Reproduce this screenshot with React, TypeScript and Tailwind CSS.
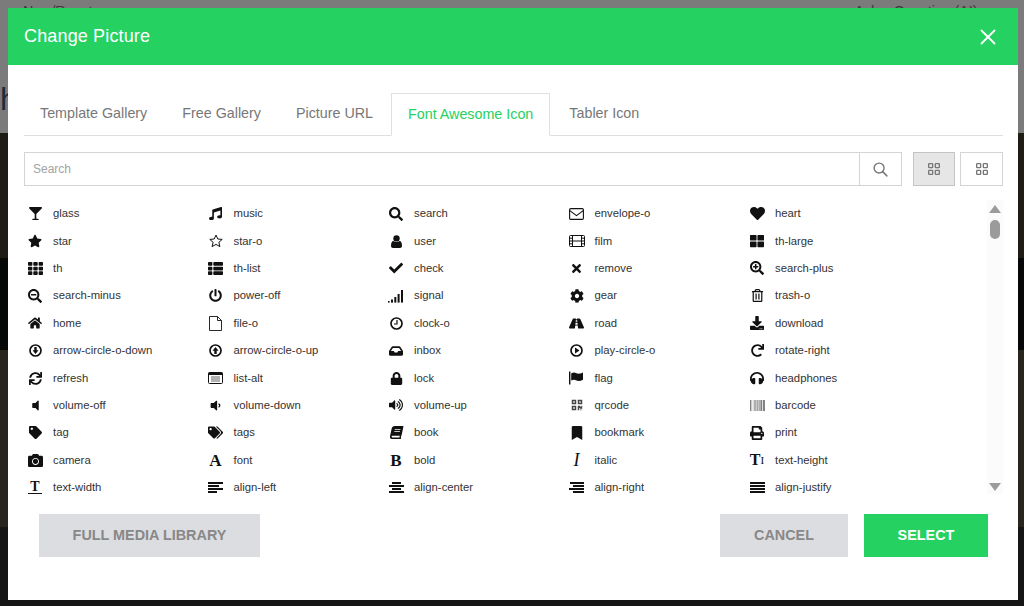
import type { ReactNode } from 'react';
import {
  FaBarcode, FaBook, FaBookmark, FaCamera, FaCheck, FaCog, FaDownload, FaGlassMartini, FaHeadphones, FaHeart, FaHome,
  FaInbox, FaLock, FaMusic, FaPowerOff, FaPrint, FaQrcode, FaRedo, FaRegTrashAlt, FaRoad, FaSearch, FaSearchMinus,
  FaSearchPlus, FaStar, FaSync, FaTag, FaTags, FaTh, FaThLarge, FaThList, FaTimes, FaVolumeDown, FaVolumeOff, FaVolumeUp,
} from 'react-icons/fa';
import { TbLayoutGrid, TbSearch, TbX } from 'react-icons/tb';

function SignalIcon() {
  return (
    <svg width="16" height="14" viewBox="0 0 16 14" fill="currentColor">
      <rect x="0" y="12" width="1.6" height="1.6" />
      <rect x="3" y="10.5" width="2" height="3.1" />
      <rect x="6.3" y="8" width="2" height="5.6" />
      <rect x="9.6" y="5" width="2" height="8.6" />
      <rect x="13" y="1" width="2" height="12.6" />
    </svg>
  );
}

function FilmIcon() {
  return (
    <svg width="16" height="14" viewBox="0 0 16 14" fill="none" stroke="currentColor" strokeWidth="1">
      <rect x="0.5" y="1.5" width="15" height="11" rx="1" />
      <path d="M3.5 1.5v11M12.5 1.5v11M3.5 7h9M0.5 4.2h3M0.5 7h3M0.5 9.8h3M12.5 4.2h3M12.5 7h3M12.5 9.8h3" />
    </svg>
  );
}

function EnvelopeIcon() {
  return (
    <svg width="15" height="12" viewBox="0 0 15 12" fill="none" stroke="currentColor" strokeWidth="1.1">
      <rect x="0.6" y="0.6" width="13.8" height="10.8" rx="1.2" />
      <path d="M0.8 2.6 7.5 7.6l6.7-5" />
    </svg>
  );
}

function StarOutlineIcon() {
  return (
    <svg width="14" height="14" viewBox="0 0 14 14" fill="none" stroke="currentColor" strokeWidth="1" strokeLinejoin="round">
      <path d="M7 1l1.8 4 4.4.4-3.3 2.9 1 4.3L7 10.4l-3.9 2.2 1-4.3L.8 5.4 5.2 5z" />
    </svg>
  );
}

function UserIcon() {
  return (
    <svg width="11" height="13" viewBox="0 0 11 13" fill="currentColor">
      <circle cx="5.5" cy="3.4" r="3.2" />
      <path d="M0 11c0-3 .8-5 2.4-5 .8.7 1.9 1.1 3.1 1.1S7.800 6.700 8.600 6C10.200 6 11 8 11 11c0 1.300-.8 2-2 2H2c-1.200 0-2-.7-2-2z" />
    </svg>
  );
}

function FileOutlineIcon() {
  return (
    <svg width="13" height="15" viewBox="0 0 13 15" fill="none" stroke="currentColor" strokeWidth="0.9">
      <path d="M.5.5h8l4 4v10H.5zM8.500.5v4h4" />
    </svg>
  );
}

function ClockIcon() {
  return (
    <svg width="13" height="13" viewBox="0 0 13 13" fill="none" stroke="currentColor" strokeWidth="1.7">
      <circle cx="6.5" cy="6.500" r="5.500" />
      <path d="M7 3v4H4" strokeWidth="1.200" />
    </svg>
  );
}

function CircleArrowIcon({ up }: { up?: boolean }) {
  return (
    <svg width="13" height="13" viewBox="0 0 13 13" className={up ? 'rotate-180' : ''}>
      <circle cx="6.500" cy="6.500" r="5.500" fill="none" stroke="currentColor" strokeWidth="1.700" />
      <path d="M5.300 3h2.400v3.300h1.800L6.500 10 3.500 6.300h1.800z" fill="currentColor" />
    </svg>
  );
}

function PlayCircleIcon() {
  return (
    <svg width="13" height="13" viewBox="0 0 13 13">
      <circle cx="6.500" cy="6.500" r="5.500" fill="none" stroke="currentColor" strokeWidth="1.700" />
      <path d="M5 3.500l4.500 3-4.500 3z" fill="currentColor" />
    </svg>
  );
}

function ListAltIcon() {
  return (
    <svg width="15" height="12" viewBox="0 0 15 12">
      <rect x="0.500" y="0.500" width="14" height="11" rx="1" fill="#fff" stroke="currentColor" />
      <rect x="0.500" y="0.500" width="14" height="2.500" fill="currentColor" />
      <path d="M3 5h9M3 7h9M3 9h9" stroke="#555" strokeWidth="0.900" />
    </svg>
  );
}

function FlagIcon() {
  return (
    <svg width="15" height="14" viewBox="0 0 15 14" fill="currentColor">
      <rect x="0" y="0.500" width="1.400" height="13" />
      <path d="M2.200 2.500c2-1.300 3.600-1 5.200-.3 2 .8 3.800.6 6.600-.7v7.200c-2.600 1.400-4.600 1.500-6.600.7-1.700-.7-3.300-.8-5.200.2z" />
    </svg>
  );
}

function AlignIcon({ rows }: { rows: [number, number][] }) {
  return (
    <svg width="15" height="11" viewBox="0 0 15 11" fill="currentColor">
      {rows.map(([x, w], i) => (
        <rect key={i} x={x} y={i * 3} width={w} height="2" />
      ))}
    </svg>
  );
}

// serif letter icons from the old font, kept as real text
function LetterIcon({ children, italic }: { children: ReactNode; italic?: boolean }) {
  return (
    <span
      className={
        italic
          ? "font-['Liberation_Serif',serif] text-[18px] leading-none italic"
          : "font-['Liberation_Serif',serif] text-[17px] font-bold leading-none"
      }
    >
      {children}
    </span>
  );
}

const icons: [ReactNode, string][] = [
  [<FaGlassMartini size={13} />, 'glass'],
  [<FaMusic size={13} />, 'music'],
  [<FaSearch size={14} />, 'search'],
  [<EnvelopeIcon />, 'envelope-o'],
  [<FaHeart size={15} />, 'heart'],
  [<FaStar size={14} />, 'star'],
  [<StarOutlineIcon />, 'star-o'],
  [<UserIcon />, 'user'],
  [<FilmIcon />, 'film'],
  [<FaThLarge size={14} />, 'th-large'],
  [<FaTh size={15} />, 'th'],
  [<FaThList size={15} />, 'th-list'],
  [<FaCheck size={14} />, 'check'],
  [<FaTimes size={13} />, 'remove'],
  [<FaSearchPlus size={14} />, 'search-plus'],
  [<FaSearchMinus size={14} />, 'search-minus'],
  [<FaPowerOff size={13} />, 'power-off'],
  [<SignalIcon />, 'signal'],
  [<FaCog size={14} />, 'gear'],
  [<FaRegTrashAlt size={13} />, 'trash-o'],
  [<FaHome size={14} />, 'home'],
  [<FileOutlineIcon />, 'file-o'],
  [<ClockIcon />, 'clock-o'],
  [<FaRoad size={15} />, 'road'],
  [<FaDownload size={14} />, 'download'],
  [<CircleArrowIcon />, 'arrow-circle-o-down'],
  [<CircleArrowIcon up />, 'arrow-circle-o-up'],
  [<FaInbox size={14} />, 'inbox'],
  [<PlayCircleIcon />, 'play-circle-o'],
  [<FaRedo size={13} />, 'rotate-right'],
  [<FaSync size={13} />, 'refresh'],
  [<ListAltIcon />, 'list-alt'],
  [<FaLock size={13} />, 'lock'],
  [<FlagIcon />, 'flag'],
  [<FaHeadphones size={14} />, 'headphones'],
  [<FaVolumeOff size={13} />, 'volume-off'],
  [<FaVolumeDown size={13} />, 'volume-down'],
  [<FaVolumeUp size={14} />, 'volume-up'],
  [<FaQrcode size={12} className="text-[#444444]" />, 'qrcode'],
  [<FaBarcode size={15} className="text-[#555555]" />, 'barcode'],
  [<FaTag size={13} />, 'tag'],
  [<FaTags size={15} />, 'tags'],
  [<FaBook size={13} className="-skew-x-12" />, 'book'],
  [<FaBookmark size={14} />, 'bookmark'],
  [<FaPrint size={14} />, 'print'],
  [<FaCamera size={15} />, 'camera'],
  [<LetterIcon>A</LetterIcon>, 'font'],
  [<LetterIcon>B</LetterIcon>, 'bold'],
  [<LetterIcon italic>I</LetterIcon>, 'italic'],
  [
    <span className="flex items-center font-['Liberation_Serif',serif] leading-none font-bold">
      <span className="text-[16px]">T</span>
      <span className="text-[11px] font-normal">I</span>
    </span>,
    'text-height',
  ],
  [
    <span className="flex flex-col items-center">
      <span className="font-['Liberation_Serif',serif] text-[14px] leading-[11px] font-bold">T</span>
      <span className="mt-[1px] h-[1px] w-[14px] bg-[#111111]" />
    </span>,
    'text-width',
  ],
  [<AlignIcon rows={[[0, 15], [0, 11], [0, 15], [0, 9]]} />, 'align-left'],
  [<AlignIcon rows={[[3, 9], [0, 15], [3, 9], [0, 15]]} />, 'align-center'],
  [<AlignIcon rows={[[1, 14], [4, 11], [0, 15], [4, 11]]} />, 'align-right'],
  [<AlignIcon rows={[[0, 15], [0, 15], [0, 15], [0, 15]]} />, 'align-justify'],
];

const tabs = ['Template Gallery', 'Free Gallery', 'Picture URL', 'Font Awesome Icon', 'Tabler Icon'];

function Backdrop() {
  return (
    <div className="absolute inset-0 flex flex-col">
      <div className="h-[133px] bg-[#7b7b7b]">
        <div className="flex pt-[2px] text-[14.2px] leading-[18px] text-[#3a3a3a]">
          <span className="ml-[23px]">New/Reset</span>
          <span className="ml-[762px]">Ask a Question (AI)</span>
        </div>
        <div className="mt-[63px] text-[32px] leading-none text-[#1d2b3a]">h</div>
      </div>
      <div className="h-[125px] bg-[#1f1c15]" />
      <div className="h-[92px] bg-[#060807]" />
      <div className="h-[177px] bg-[#28251f]" />
      <div className="flex-1 bg-[#151515]" />
    </div>
  );
}

export default function App() {
  return (
    <div className="relative h-[606px] w-[1024px] overflow-hidden font-['Liberation_Sans',Arial,sans-serif]">
      <Backdrop />
      <div className="relative ml-2 flex h-[592px] w-[1010px] translate-y-2 flex-col bg-white">
        <header className="flex h-[57px] shrink-0 items-center justify-between bg-[#25d160] pl-4 pr-[17px] text-white">
          <h1 className="text-[18px] tracking-[0.15px]">Change Picture</h1>
          <TbX size={26} strokeWidth={1.7} />
        </header>

        <div className="flex flex-1 flex-col pl-4 pr-[15px] pt-7">
          <div className="flex h-[43px] shrink-0 border-b border-[#dfdfdf]">
            {tabs.map((tab, i) => (
              <div
                key={tab}
                className={
                  i === 3
                    ? "mb-[-1px] mr-[3px] flex h-[43px] items-center border border-[#dfdfdf] border-b-white bg-white px-4 text-[14.3px] text-[#25d160]"
                    : i === 2
                      ? "mr-[2px] flex h-[42px] items-center px-4 text-[14.3px] text-[#777777]"
                      : "mr-[3px] flex h-[42px] items-center px-4 text-[14.3px] text-[#777777]"
                }
              >
                {tab}
              </div>
            ))}
          </div>

          <div className="mt-4 flex h-[34px] shrink-0">
            <div className="flex w-[878px] border border-[#d4d4d4]">
              <div className="flex flex-1 items-center px-2 text-[12px] text-[#a3a3a3]">Search</div>
              <div className="flex w-[42px] items-center justify-center border-l border-[#d4d4d4] text-[#777777]">
                <TbSearch size={17} />
              </div>
            </div>
            <div className="ml-[11px] flex w-[42px] items-center justify-center border border-[#c4c4c4] bg-[#e6e6e6] text-[#777777]">
              <TbLayoutGrid size={16} />
            </div>
            <div className="ml-[5px] flex w-[43px] items-center justify-center border border-[#d4d4d4] text-[#777777]">
              <TbLayoutGrid size={16} />
            </div>
          </div>

          <div className="mt-[14px] flex h-[302px] shrink-0">
            <div className="grid w-[963px] grid-cols-[repeat(5,180.5px)] auto-rows-[27.4px]">
              {icons.map(([icon, name]) => (
                <div key={name} className="flex items-center">
                  <span className="flex w-[22px] justify-center text-[#111111]">{icon}</span>
                  <span className="ml-[7px] text-[11.3px] text-[#333333]">{name}</span>
                </div>
              ))}
            </div>
            <div className="flex h-[294px] w-[16px] flex-col items-center bg-[#fbfbfb] pt-[5px]">
              <div className="h-0 w-0 border-x-[6px] border-b-[8px] border-x-transparent border-b-[#9b9b9b]" />
              <div className="mt-[7px] h-[19px] w-[10px] rounded-[5px] bg-[#9b9b9b]" />
              <div className="mt-auto mb-[3px] h-0 w-0 border-x-[6px] border-t-[8px] border-x-transparent border-t-[#9b9b9b]" />
            </div>
          </div>

          <div className="mt-3 flex h-[43px] shrink-0 pl-[15px] text-[14.4px] font-bold">
            <button className="w-[221px] bg-[#dcdde0] text-[#888888]">FULL MEDIA LIBRARY</button>
            <button className="ml-auto w-[128px] bg-[#dcdde0] text-[#888888]">CANCEL</button>
            <button className="ml-4 mr-[15px] w-[124px] bg-[#25d160] text-white">SELECT</button>
          </div>
        </div>
      </div>
    </div>
  );
}
